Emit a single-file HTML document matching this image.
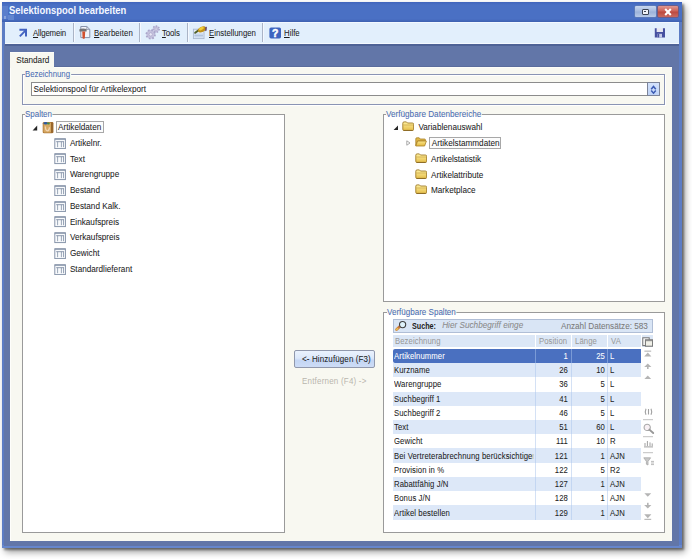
<!DOCTYPE html>
<html><head><meta charset="utf-8"><style>
html,body{margin:0;padding:0;}
body{width:692px;height:559px;position:relative;overflow:hidden;background:#fff;font-family:"Liberation Sans",sans-serif;}
body>div{position:absolute;}
.t{white-space:nowrap;line-height:12px;height:12px;-webkit-text-stroke:0.05px currentColor;}
u{text-decoration:underline;text-underline-offset:1px;}
</style></head><body>
<div style="left:2px;top:2px;width:680px;height:546px;background:#5c7cc4;box-shadow:2px 2px 2px rgba(0,0,0,0.4), 3px 4px 7px rgba(0,0,0,0.4);"></div>
<div style="left:2px;top:545px;width:680px;height:3px;background:#6686cc;"></div>
<div style="left:2px;top:2px;width:680px;height:20px;background:linear-gradient(#4064bc 0px,#4a70c4 3px,#4a70c4 17px,#3e60b0 20px);"></div>
<div style="left:2px;top:6px;width:6px;height:13px;background:#5a7ecc;"></div>
<div style="left:8px;top:15px;width:6px;height:5px;background:#6286d0;"></div>
<div style="left:4px;top:16px;width:2px;height:3px;background:#8aa4dc;"></div>
<div class="t" style="left:8.8px;top:3.93px;font-size:10.6px;color:#f4f7ff;transform:scaleX(0.89);transform-origin:left top;font-weight:bold;-webkit-text-stroke:0;">Selektionspool bearbeiten</div>
<div style="left:635px;top:6px;width:21px;height:11px;background:linear-gradient(#c8d6ee,#a8bce0 45%,#9cb2da 55%,#b8cae8);border-radius:1px;box-shadow:0 0 0 0.6px #6a80b0;"></div>
<div style="left:641.5px;top:8.5px;width:7.0px;height:6.3px;border:1.2px solid #3c4454;box-sizing:border-box;background:#f0f2f8;border-radius:1px;"></div>
<div style="left:643.6px;top:10.9px;width:2.8px;height:1.4px;background:#3c4454;"></div>
<div style="left:658px;top:6px;width:20px;height:11px;background:linear-gradient(#e09890,#cc6258 45%,#bc4a40 55%,#c86a60);border-radius:1px;box-shadow:0 0 0 0.6px #8a4a50;"></div>
<div style="left:4px;top:44px;width:674.5px;height:501.5px;background:#6276a8;"></div>
<div style="left:5px;top:22px;width:674px;height:22px;background:#e2effc;border-top:1px solid #f2f8ff;border-bottom:1px solid #f4f9ff;box-sizing:border-box;"></div>
<div style="left:5px;top:44px;width:674px;height:1.5px;background:#4e6296;"></div>
<div style="left:10px;top:66px;width:662px;height:475px;background:#5a6c9c;"></div>
<div style="left:10px;top:67px;width:662px;height:474px;background:#f8f8f1;border-top:1px solid #fdfdf8;border-left:1.5px solid #fefefb;box-sizing:border-box;"></div>
<div style="left:10px;top:52px;width:44px;height:16px;background:#f8f8f1;border-top:1px solid #fdfdf8;box-sizing:border-box;"></div>
<div class="t" style="left:16.2px;top:55.06px;font-size:8.2px;color:#1c1c1c;">Standard</div>
<div style="left:73px;top:23px;width:1px;height:19px;background:#aab4c6;"></div>
<div style="left:74px;top:23px;width:1px;height:19px;background:#f4f8ff;"></div>
<div style="left:139px;top:23px;width:1px;height:19px;background:#aab4c6;"></div>
<div style="left:140px;top:23px;width:1px;height:19px;background:#f4f8ff;"></div>
<div style="left:187px;top:23px;width:1px;height:19px;background:#aab4c6;"></div>
<div style="left:188px;top:23px;width:1px;height:19px;background:#f4f8ff;"></div>
<div style="left:262px;top:23px;width:1px;height:19px;background:#aab4c6;"></div>
<div style="left:263px;top:23px;width:1px;height:19px;background:#f4f8ff;"></div>
<div class="t" style="left:33px;top:27.22px;font-size:8.6px;color:#1c1c1c;transform:scaleX(0.91);transform-origin:left top;letter-spacing:-0.17px;"><u>A</u>llgemein</div>
<div class="t" style="left:94.3px;top:27.22px;font-size:8.6px;color:#1c1c1c;transform:scaleX(0.91);transform-origin:left top;letter-spacing:0.11px;"><u>B</u>earbeiten</div>
<div class="t" style="left:162.3px;top:27.22px;font-size:8.6px;color:#1c1c1c;transform:scaleX(0.91);transform-origin:left top;letter-spacing:-0.09px;"><u>T</u>ools</div>
<div class="t" style="left:208.9px;top:27.22px;font-size:8.6px;color:#1c1c1c;transform:scaleX(0.91);transform-origin:left top;letter-spacing:0px;"><u>E</u>instellungen</div>
<div class="t" style="left:283.8px;top:27.22px;font-size:8.6px;color:#1c1c1c;transform:scaleX(0.91);transform-origin:left top;letter-spacing:0px;"><u>H</u>ilfe</div>
<div style="left:23px;top:75px;width:643px;height:31px;border:1px solid #ffffff;box-sizing:border-box;background:transparent;"></div>
<div style="left:22px;top:74px;width:643px;height:31px;border:1px solid #8a94b4;box-sizing:border-box;background:transparent;"></div>
<div class="t" style="left:25px;top:67.82px;font-size:8.6px;color:#4a6cb4;transform:scaleX(0.905);transform-origin:left top;background:#f8f8f1;padding:0 1px 0 0;height:8px;">Bezeichnung</div>
<div style="left:31px;top:82px;width:629px;height:14px;border:1px solid #8c8c8c;box-sizing:border-box;background:#fff;"></div>
<div class="t" style="left:33.6px;top:84.46px;font-size:8.2px;color:#1c1c1c;">Selektionspool f&uuml;r Artikelexport</div>
<div style="left:647px;top:82px;width:13px;height:14px;border:1px solid #7c8498;box-sizing:border-box;background:linear-gradient(#d4e3fb,#bed2f6);"></div>
<div style="left:22px;top:114px;width:263px;height:419px;border:1px solid #9a9a9a;box-sizing:border-box;background:#fff;"></div>
<div class="t" style="left:25.3px;top:108.19px;font-size:8.7px;color:#4a6cb4;transform:scaleX(0.915);transform-origin:left top;background:#f8f8f1;padding:0 1px 0 0;height:8px;">Spalten</div>
<div style="left:56px;top:121px;width:48px;height:12px;border:1px solid #a8a8a8;box-sizing:border-box;background:#fcfcfc;"></div>
<div class="t" style="left:58px;top:121.96px;font-size:8.2px;color:#1c1c1c;">Artikeldaten</div>
<div class="t" style="left:69.9px;top:137.96px;font-size:8.2px;color:#1c1c1c;">Artikelnr.</div>
<div class="t" style="left:69.9px;top:153.70px;font-size:8.2px;color:#1c1c1c;">Text</div>
<div class="t" style="left:69.9px;top:169.44px;font-size:8.2px;color:#1c1c1c;">Warengruppe</div>
<div class="t" style="left:69.9px;top:185.18px;font-size:8.2px;color:#1c1c1c;">Bestand</div>
<div class="t" style="left:69.9px;top:200.92px;font-size:8.2px;color:#1c1c1c;">Bestand Kalk.</div>
<div class="t" style="left:69.9px;top:216.66px;font-size:8.2px;color:#1c1c1c;">Einkaufspreis</div>
<div class="t" style="left:69.9px;top:232.40px;font-size:8.2px;color:#1c1c1c;">Verkaufspreis</div>
<div class="t" style="left:69.9px;top:248.14px;font-size:8.2px;color:#1c1c1c;">Gewicht</div>
<div class="t" style="left:69.9px;top:263.88px;font-size:8.2px;color:#1c1c1c;">Standardlieferant</div>
<div style="left:294px;top:350px;width:81px;height:18px;background:linear-gradient(#eaf2fd 0%,#dce8fa 45%,#c4d6f4 60%,#cddcf6 100%);border:1px solid #9098ac;border-radius:2px;box-sizing:border-box;"></div>
<div class="t" style="left:302.2px;top:353.02px;font-size:8.6px;color:#1c1c1c;transform:scaleX(0.93);transform-origin:left top;letter-spacing:0.12px;">&lt;- Hinzuf&uuml;gen (F3)</div>
<div class="t" style="left:302.4px;top:374.62px;font-size:8.6px;color:#b8b6ae;transform:scaleX(0.93);transform-origin:left top;letter-spacing:0.22px;-webkit-text-stroke:0;">Entfernen (F4) -&gt;</div>
<div style="left:383px;top:114px;width:282px;height:188px;border:1px solid #9a9a9a;box-sizing:border-box;background:#fff;"></div>
<div class="t" style="left:386.3px;top:107.79px;font-size:8.7px;color:#4a6cb4;transform:scaleX(0.94);transform-origin:left top;background:#f8f8f1;padding:0 1px 0 0;height:8px;">Verf&uuml;gbare Datenbereiche</div>
<div class="t" style="left:418.4px;top:121.56px;font-size:8.2px;color:#1c1c1c;">Variablenauswahl</div>
<div style="left:429px;top:137px;width:72px;height:12px;border:1px solid #a8a8a8;box-sizing:border-box;background:#fcfcfc;"></div>
<div class="t" style="left:431.8px;top:138.16px;font-size:8.2px;color:#1c1c1c;">Artikelstammdaten</div>
<div class="t" style="left:431px;top:153.96px;font-size:8.2px;color:#1c1c1c;">Artikelstatistik</div>
<div class="t" style="left:431px;top:169.66px;font-size:8.2px;color:#1c1c1c;">Artikelattribute</div>
<div class="t" style="left:431px;top:185.36px;font-size:8.2px;color:#1c1c1c;">Marketplace</div>
<div style="left:383px;top:312px;width:282px;height:221px;border:1px solid #9a9a9a;box-sizing:border-box;background:#fff;"></div>
<div class="t" style="left:386.6px;top:305.59px;font-size:8.7px;color:#4a6cb4;transform:scaleX(0.925);transform-origin:left top;background:#f8f8f1;padding:0 1px 0 0;height:8px;">Verf&uuml;gbare Spalten</div>
<div style="left:393px;top:319px;width:260px;height:14px;border:1px solid #b0bed6;box-sizing:border-box;background:#d9e5f5;"></div>
<div class="t" style="left:411.8px;top:319.89px;font-size:8.4px;color:#1c1c1c;transform:scaleX(0.86);transform-origin:left top;font-weight:bold;-webkit-text-stroke:0;">Suche:</div>
<div class="t" style="left:442.2px;top:320.36px;font-size:8.2px;color:#8a8a8a;font-style:italic;">Hier Suchbegriff einge</div>
<div class="t" style="left:447.9px;width:200px;text-align:right;top:320.56px;font-size:8.2px;color:#7a7a7a;">Anzahl Datens&auml;tze: 583</div>
<div style="left:393px;top:335px;width:142px;height:12px;background:#dce7f6;"></div>
<div style="left:536px;top:335px;width:35px;height:12px;background:#dce7f6;"></div>
<div style="left:572px;top:335px;width:35px;height:12px;background:#dce7f6;"></div>
<div style="left:608px;top:335px;width:33px;height:12px;background:#dce7f6;"></div>
<div style="left:642px;top:335px;width:11px;height:12px;background:#dce7f6;"></div>
<div class="t" style="left:394.5px;top:334.82px;font-size:8.9px;color:#999999;transform:scaleX(0.87);transform-origin:left top;letter-spacing:0.1px;">Bezeichnung</div>
<div class="t" style="left:539px;top:334.82px;font-size:8.9px;color:#999999;transform:scaleX(0.87);transform-origin:left top;letter-spacing:0.1px;">Position</div>
<div class="t" style="left:574.6px;top:334.82px;font-size:8.9px;color:#999999;transform:scaleX(0.87);transform-origin:left top;letter-spacing:0.1px;">L&auml;nge</div>
<div class="t" style="left:611px;top:334.82px;font-size:8.9px;color:#999999;transform:scaleX(0.87);transform-origin:left top;letter-spacing:0.1px;">VA</div>
<div style="left:393px;top:349px;width:248px;height:14px;background:#4a70c0;border-radius:2px 0 0 2px;"></div>
<div class="t" style="left:393.6px;top:349.92px;font-size:8.9px;color:#ffffff;width:160.3448275862069px;overflow:hidden;transform:scaleX(0.87);transform-origin:left top;letter-spacing:0.1px;">Artikelnummer</div>
<div class="t" style="left:368.29999999999995px;width:200px;text-align:right;top:349.92px;font-size:8.9px;color:#ffffff;transform:scaleX(0.87);transform-origin:right top;letter-spacing:0.1px;">1</div>
<div class="t" style="left:404.79999999999995px;width:200px;text-align:right;top:349.92px;font-size:8.9px;color:#ffffff;transform:scaleX(0.87);transform-origin:right top;letter-spacing:0.1px;">25</div>
<div class="t" style="left:609.6px;top:349.92px;font-size:8.9px;color:#ffffff;transform:scaleX(0.87);transform-origin:left top;letter-spacing:0.1px;">L</div>
<div style="left:393px;top:363px;width:248px;height:14px;background:#dde8f8;"></div>
<div class="t" style="left:393.6px;top:364.16px;font-size:8.9px;color:#1c1c1c;width:160.3448275862069px;overflow:hidden;transform:scaleX(0.87);transform-origin:left top;letter-spacing:0.1px;">Kurzname</div>
<div class="t" style="left:368.29999999999995px;width:200px;text-align:right;top:364.16px;font-size:8.9px;color:#1c1c1c;transform:scaleX(0.87);transform-origin:right top;letter-spacing:0.1px;">26</div>
<div class="t" style="left:404.79999999999995px;width:200px;text-align:right;top:364.16px;font-size:8.9px;color:#1c1c1c;transform:scaleX(0.87);transform-origin:right top;letter-spacing:0.1px;">10</div>
<div class="t" style="left:609.6px;top:364.16px;font-size:8.9px;color:#1c1c1c;transform:scaleX(0.87);transform-origin:left top;letter-spacing:0.1px;">L</div>
<div style="left:393px;top:377px;width:248px;height:15px;background:#ffffff;"></div>
<div class="t" style="left:393.6px;top:378.40px;font-size:8.9px;color:#1c1c1c;width:160.3448275862069px;overflow:hidden;transform:scaleX(0.87);transform-origin:left top;letter-spacing:0.1px;">Warengruppe</div>
<div class="t" style="left:368.29999999999995px;width:200px;text-align:right;top:378.40px;font-size:8.9px;color:#1c1c1c;transform:scaleX(0.87);transform-origin:right top;letter-spacing:0.1px;">36</div>
<div class="t" style="left:404.79999999999995px;width:200px;text-align:right;top:378.40px;font-size:8.9px;color:#1c1c1c;transform:scaleX(0.87);transform-origin:right top;letter-spacing:0.1px;">5</div>
<div class="t" style="left:609.6px;top:378.40px;font-size:8.9px;color:#1c1c1c;transform:scaleX(0.87);transform-origin:left top;letter-spacing:0.1px;">L</div>
<div style="left:393px;top:392px;width:248px;height:14px;background:#dde8f8;"></div>
<div class="t" style="left:393.6px;top:392.64px;font-size:8.9px;color:#1c1c1c;width:160.3448275862069px;overflow:hidden;transform:scaleX(0.87);transform-origin:left top;letter-spacing:0.1px;">Suchbegriff 1</div>
<div class="t" style="left:368.29999999999995px;width:200px;text-align:right;top:392.64px;font-size:8.9px;color:#1c1c1c;transform:scaleX(0.87);transform-origin:right top;letter-spacing:0.1px;">41</div>
<div class="t" style="left:404.79999999999995px;width:200px;text-align:right;top:392.64px;font-size:8.9px;color:#1c1c1c;transform:scaleX(0.87);transform-origin:right top;letter-spacing:0.1px;">5</div>
<div class="t" style="left:609.6px;top:392.64px;font-size:8.9px;color:#1c1c1c;transform:scaleX(0.87);transform-origin:left top;letter-spacing:0.1px;">L</div>
<div style="left:393px;top:406px;width:248px;height:14px;background:#ffffff;"></div>
<div class="t" style="left:393.6px;top:406.88px;font-size:8.9px;color:#1c1c1c;width:160.3448275862069px;overflow:hidden;transform:scaleX(0.87);transform-origin:left top;letter-spacing:0.1px;">Suchbegriff 2</div>
<div class="t" style="left:368.29999999999995px;width:200px;text-align:right;top:406.88px;font-size:8.9px;color:#1c1c1c;transform:scaleX(0.87);transform-origin:right top;letter-spacing:0.1px;">46</div>
<div class="t" style="left:404.79999999999995px;width:200px;text-align:right;top:406.88px;font-size:8.9px;color:#1c1c1c;transform:scaleX(0.87);transform-origin:right top;letter-spacing:0.1px;">5</div>
<div class="t" style="left:609.6px;top:406.88px;font-size:8.9px;color:#1c1c1c;transform:scaleX(0.87);transform-origin:left top;letter-spacing:0.1px;">L</div>
<div style="left:393px;top:420px;width:248px;height:14px;background:#dde8f8;"></div>
<div class="t" style="left:393.6px;top:421.12px;font-size:8.9px;color:#1c1c1c;width:160.3448275862069px;overflow:hidden;transform:scaleX(0.87);transform-origin:left top;letter-spacing:0.1px;">Text</div>
<div class="t" style="left:368.29999999999995px;width:200px;text-align:right;top:421.12px;font-size:8.9px;color:#1c1c1c;transform:scaleX(0.87);transform-origin:right top;letter-spacing:0.1px;">51</div>
<div class="t" style="left:404.79999999999995px;width:200px;text-align:right;top:421.12px;font-size:8.9px;color:#1c1c1c;transform:scaleX(0.87);transform-origin:right top;letter-spacing:0.1px;">60</div>
<div class="t" style="left:609.6px;top:421.12px;font-size:8.9px;color:#1c1c1c;transform:scaleX(0.87);transform-origin:left top;letter-spacing:0.1px;">L</div>
<div style="left:393px;top:434px;width:248px;height:14px;background:#ffffff;"></div>
<div class="t" style="left:393.6px;top:435.36px;font-size:8.9px;color:#1c1c1c;width:160.3448275862069px;overflow:hidden;transform:scaleX(0.87);transform-origin:left top;letter-spacing:0.1px;">Gewicht</div>
<div class="t" style="left:368.29999999999995px;width:200px;text-align:right;top:435.36px;font-size:8.9px;color:#1c1c1c;transform:scaleX(0.87);transform-origin:right top;letter-spacing:0.1px;">111</div>
<div class="t" style="left:404.79999999999995px;width:200px;text-align:right;top:435.36px;font-size:8.9px;color:#1c1c1c;transform:scaleX(0.87);transform-origin:right top;letter-spacing:0.1px;">10</div>
<div class="t" style="left:609.6px;top:435.36px;font-size:8.9px;color:#1c1c1c;transform:scaleX(0.87);transform-origin:left top;letter-spacing:0.1px;">R</div>
<div style="left:393px;top:448px;width:248px;height:15px;background:#dde8f8;"></div>
<div class="t" style="left:393.6px;top:449.60px;font-size:8.9px;color:#1c1c1c;width:160.3448275862069px;overflow:hidden;transform:scaleX(0.87);transform-origin:left top;letter-spacing:0.1px;">Bei Vertreterabrechnung ber&uuml;cksichtigen</div>
<div class="t" style="left:368.29999999999995px;width:200px;text-align:right;top:449.60px;font-size:8.9px;color:#1c1c1c;transform:scaleX(0.87);transform-origin:right top;letter-spacing:0.1px;">121</div>
<div class="t" style="left:404.79999999999995px;width:200px;text-align:right;top:449.60px;font-size:8.9px;color:#1c1c1c;transform:scaleX(0.87);transform-origin:right top;letter-spacing:0.1px;">1</div>
<div class="t" style="left:609.6px;top:449.60px;font-size:8.9px;color:#1c1c1c;transform:scaleX(0.87);transform-origin:left top;letter-spacing:0.1px;">AJN</div>
<div style="left:393px;top:463px;width:248px;height:14px;background:#ffffff;"></div>
<div class="t" style="left:393.6px;top:463.84px;font-size:8.9px;color:#1c1c1c;width:160.3448275862069px;overflow:hidden;transform:scaleX(0.87);transform-origin:left top;letter-spacing:0.1px;">Provision in %</div>
<div class="t" style="left:368.29999999999995px;width:200px;text-align:right;top:463.84px;font-size:8.9px;color:#1c1c1c;transform:scaleX(0.87);transform-origin:right top;letter-spacing:0.1px;">122</div>
<div class="t" style="left:404.79999999999995px;width:200px;text-align:right;top:463.84px;font-size:8.9px;color:#1c1c1c;transform:scaleX(0.87);transform-origin:right top;letter-spacing:0.1px;">5</div>
<div class="t" style="left:609.6px;top:463.84px;font-size:8.9px;color:#1c1c1c;transform:scaleX(0.87);transform-origin:left top;letter-spacing:0.1px;">R2</div>
<div style="left:393px;top:477px;width:248px;height:14px;background:#dde8f8;"></div>
<div class="t" style="left:393.6px;top:478.08px;font-size:8.9px;color:#1c1c1c;width:160.3448275862069px;overflow:hidden;transform:scaleX(0.87);transform-origin:left top;letter-spacing:0.1px;">Rabattf&auml;hig J/N</div>
<div class="t" style="left:368.29999999999995px;width:200px;text-align:right;top:478.08px;font-size:8.9px;color:#1c1c1c;transform:scaleX(0.87);transform-origin:right top;letter-spacing:0.1px;">127</div>
<div class="t" style="left:404.79999999999995px;width:200px;text-align:right;top:478.08px;font-size:8.9px;color:#1c1c1c;transform:scaleX(0.87);transform-origin:right top;letter-spacing:0.1px;">1</div>
<div class="t" style="left:609.6px;top:478.08px;font-size:8.9px;color:#1c1c1c;transform:scaleX(0.87);transform-origin:left top;letter-spacing:0.1px;">AJN</div>
<div style="left:393px;top:491px;width:248px;height:14px;background:#ffffff;"></div>
<div class="t" style="left:393.6px;top:492.32px;font-size:8.9px;color:#1c1c1c;width:160.3448275862069px;overflow:hidden;transform:scaleX(0.87);transform-origin:left top;letter-spacing:0.1px;">Bonus J/N</div>
<div class="t" style="left:368.29999999999995px;width:200px;text-align:right;top:492.32px;font-size:8.9px;color:#1c1c1c;transform:scaleX(0.87);transform-origin:right top;letter-spacing:0.1px;">128</div>
<div class="t" style="left:404.79999999999995px;width:200px;text-align:right;top:492.32px;font-size:8.9px;color:#1c1c1c;transform:scaleX(0.87);transform-origin:right top;letter-spacing:0.1px;">1</div>
<div class="t" style="left:609.6px;top:492.32px;font-size:8.9px;color:#1c1c1c;transform:scaleX(0.87);transform-origin:left top;letter-spacing:0.1px;">AJN</div>
<div style="left:393px;top:505px;width:248px;height:15px;background:#dde8f8;"></div>
<div class="t" style="left:393.6px;top:506.56px;font-size:8.9px;color:#1c1c1c;width:160.3448275862069px;overflow:hidden;transform:scaleX(0.87);transform-origin:left top;letter-spacing:0.1px;">Artikel bestellen</div>
<div class="t" style="left:368.29999999999995px;width:200px;text-align:right;top:506.56px;font-size:8.9px;color:#1c1c1c;transform:scaleX(0.87);transform-origin:right top;letter-spacing:0.1px;">129</div>
<div class="t" style="left:404.79999999999995px;width:200px;text-align:right;top:506.56px;font-size:8.9px;color:#1c1c1c;transform:scaleX(0.87);transform-origin:right top;letter-spacing:0.1px;">1</div>
<div class="t" style="left:609.6px;top:506.56px;font-size:8.9px;color:#1c1c1c;transform:scaleX(0.87);transform-origin:left top;letter-spacing:0.1px;">AJN</div>
<div style="left:535px;top:349px;width:1px;height:171px;background:rgba(170,195,235,0.5);"></div>
<div style="left:571px;top:349px;width:1px;height:171px;background:rgba(170,195,235,0.5);"></div>
<div style="left:607px;top:349px;width:1px;height:171px;background:rgba(170,195,235,0.5);"></div>
<svg width="0" height="0" style="position:absolute"><defs><linearGradient id="fg" x1="0" y1="0" x2="0" y2="1"><stop offset="0" stop-color="#fdf0a0"/><stop offset="1" stop-color="#e6be4a"/></linearGradient><linearGradient id="fg2" x1="0" y1="0" x2="0" y2="1"><stop offset="0" stop-color="#fbe68a"/><stop offset="1" stop-color="#e2b83e"/></linearGradient></defs></svg>
<svg style="position:absolute;left:17px;top:27px;" width="12" height="12" viewBox="0 0 12 12"><path d="M2.4 2.8 H9 V9.4" fill="none" stroke="#4262c0" stroke-width="2"/><path d="M2.8 9.4 L8.4 3.6" stroke="#4262c0" stroke-width="1.9"/></svg>
<svg style="position:absolute;left:78px;top:24px;" width="14" height="16" viewBox="0 0 14 16"><path d="M2.8 2.5 H8.8 L11.8 5.4 V13.6 H2.8 Z" fill="#f2f4fa" stroke="#8892aa" stroke-width="1"/><path d="M8.8 2.5 V5.4 H11.8" fill="none" stroke="#8892aa" stroke-width="0.8"/><path d="M1.4 5.2 Q4.6 4 8.6 5 V7.6 H1.4 Z" fill="#747478"/><path d="M4.2 7.4 H7.2 L6.8 14.2 Q5.7 15.2 4.6 14.2 Z" fill="#d2502e"/></svg>
<svg style="position:absolute;left:144px;top:24px;" width="18" height="16" viewBox="0 0 18 16"><circle cx="6.7" cy="10.4" r="4.3" fill="#c6c2de" stroke="#aaa6ca" stroke-width="1.8" stroke-dasharray="1.7 1.68"/><circle cx="6.7" cy="10.4" r="1.7" fill="#e8e6f4" stroke="#a8a4c8" stroke-width="0.7"/><circle cx="12.1" cy="5.1" r="3.1" fill="#c6c2de" stroke="#aaa6ca" stroke-width="1.5" stroke-dasharray="1.4 1.38"/><circle cx="12.1" cy="5.1" r="1.2" fill="#e8e6f4" stroke="#a8a4c8" stroke-width="0.6"/></svg>
<svg style="position:absolute;left:192px;top:24px;" width="16" height="16" viewBox="0 0 16 16"><rect x="1.4" y="5.2" width="10.6" height="9.4" fill="#e4ecf6" stroke="#a8b8d0" stroke-width="0.9"/><rect x="2.4" y="9.4" width="8.6" height="4.2" fill="#c8d8ee"/><path d="M2.4 11.6 H11" stroke="#a8bcd8" stroke-width="0.8"/><path d="M3.2 8.8 L6.6 6.2" stroke="#50602a" stroke-width="2" stroke-linecap="round"/><ellipse cx="10" cy="5.4" rx="4.3" ry="2.7" transform="rotate(-25 10 5.4)" fill="#c09018"/><ellipse cx="9.4" cy="4.6" rx="2.6" ry="1.4" transform="rotate(-25 9.4 4.6)" fill="#f0cc38"/><path d="M13.4 3 L14.8 2.8 L14.6 6.6 L13.2 7.2 Z" fill="#5a3a68"/></svg>
<svg style="position:absolute;left:269px;top:26.5px;" width="12.5" height="12" viewBox="0 0 12.5 12"><rect x="0.4" y="0.4" width="11.6" height="11" rx="1.6" fill="#3c64c0"/><text x="6.2" y="9.8" font-family="Liberation Sans" font-weight="bold" font-size="10.5" fill="#fff" stroke="#fff" stroke-width="0.5" text-anchor="middle">?</text></svg>
<svg style="position:absolute;left:653.5px;top:27px;" width="12" height="11" viewBox="0 0 12 11"><path d="M0.8 1.2 H2.8 V5 H8.8 V1.2 H11 V10.6 H0.8 Z" fill="#4650a0"/><rect x="2.8" y="1.2" width="6" height="3.8" fill="#e6e6f0"/><rect x="3.4" y="6.8" width="4.6" height="3.8" fill="#c4cae8"/><rect x="3.6" y="7" width="1.6" height="3.4" fill="#4650a0"/></svg>
<svg style="position:absolute;left:649px;top:84px;" width="10" height="11" viewBox="0 0 10 11"><path d="M2.2 5.2 L4.5 2.4 L6.8 5.2" fill="none" stroke="#3a5ab2" stroke-width="1.5"/><path d="M2.2 6.6 L4.5 9.2 L6.8 6.6" fill="none" stroke="#3a5ab2" stroke-width="1.5"/></svg>
<svg style="position:absolute;left:32px;top:124.8px;" width="6" height="6" viewBox="0 0 6 6"><path d="M0.6 5.4 H5.2 V0.6 Z" fill="#262626"/></svg>
<svg style="position:absolute;left:41.5px;top:121.2px;" width="12" height="13" viewBox="0 0 12 13"><rect x="0.7" y="0.9" width="10.6" height="11.4" rx="1.4" fill="#b07a38"/><rect x="1.5" y="1.8" width="7.6" height="9.6" rx="0.8" fill="#d6a862"/><rect x="9" y="1.4" width="2.2" height="10.4" fill="#98662c"/><ellipse cx="3.6" cy="2.3" rx="2" ry="1.2" fill="#2c5aa4"/><ellipse cx="6.4" cy="2.5" rx="1.4" ry="1" fill="#3c8c4c"/><path d="M3.4 5.6 Q3.4 9.8 5.4 9.8 Q7.4 9.8 7.4 6.2" fill="none" stroke="#f2d4b0" stroke-width="1.3"/></svg>
<svg style="position:absolute;left:53.6px;top:137.70000000000002px;" width="12.5" height="11.5" viewBox="0 0 12.5 11.5"><rect x="0.8" y="0.8" width="10.6" height="9.8" fill="#f8fafc" stroke="#8290a6" stroke-width="0.95"/><rect x="0.8" y="0.6" width="10.6" height="1.1" fill="#8290a6"/><path d="M2.2 3.7 H10" stroke="#8290a6" stroke-width="0.9"/><path d="M3.6 3.7 V9.2 M7.4 3.7 V9.2 M9.5 3.7 V9.2" stroke="#8290a6" stroke-width="0.8"/></svg>
<svg style="position:absolute;left:53.6px;top:153.44000000000003px;" width="12.5" height="11.5" viewBox="0 0 12.5 11.5"><rect x="0.8" y="0.8" width="10.6" height="9.8" fill="#f8fafc" stroke="#8290a6" stroke-width="0.95"/><rect x="0.8" y="0.6" width="10.6" height="1.1" fill="#8290a6"/><path d="M2.2 3.7 H10" stroke="#8290a6" stroke-width="0.9"/><path d="M3.6 3.7 V9.2 M7.4 3.7 V9.2 M9.5 3.7 V9.2" stroke="#8290a6" stroke-width="0.8"/></svg>
<svg style="position:absolute;left:53.6px;top:169.18px;" width="12.5" height="11.5" viewBox="0 0 12.5 11.5"><rect x="0.8" y="0.8" width="10.6" height="9.8" fill="#f8fafc" stroke="#8290a6" stroke-width="0.95"/><rect x="0.8" y="0.6" width="10.6" height="1.1" fill="#8290a6"/><path d="M2.2 3.7 H10" stroke="#8290a6" stroke-width="0.9"/><path d="M3.6 3.7 V9.2 M7.4 3.7 V9.2 M9.5 3.7 V9.2" stroke="#8290a6" stroke-width="0.8"/></svg>
<svg style="position:absolute;left:53.6px;top:184.92000000000002px;" width="12.5" height="11.5" viewBox="0 0 12.5 11.5"><rect x="0.8" y="0.8" width="10.6" height="9.8" fill="#f8fafc" stroke="#8290a6" stroke-width="0.95"/><rect x="0.8" y="0.6" width="10.6" height="1.1" fill="#8290a6"/><path d="M2.2 3.7 H10" stroke="#8290a6" stroke-width="0.9"/><path d="M3.6 3.7 V9.2 M7.4 3.7 V9.2 M9.5 3.7 V9.2" stroke="#8290a6" stroke-width="0.8"/></svg>
<svg style="position:absolute;left:53.6px;top:200.66000000000003px;" width="12.5" height="11.5" viewBox="0 0 12.5 11.5"><rect x="0.8" y="0.8" width="10.6" height="9.8" fill="#f8fafc" stroke="#8290a6" stroke-width="0.95"/><rect x="0.8" y="0.6" width="10.6" height="1.1" fill="#8290a6"/><path d="M2.2 3.7 H10" stroke="#8290a6" stroke-width="0.9"/><path d="M3.6 3.7 V9.2 M7.4 3.7 V9.2 M9.5 3.7 V9.2" stroke="#8290a6" stroke-width="0.8"/></svg>
<svg style="position:absolute;left:53.6px;top:216.4px;" width="12.5" height="11.5" viewBox="0 0 12.5 11.5"><rect x="0.8" y="0.8" width="10.6" height="9.8" fill="#f8fafc" stroke="#8290a6" stroke-width="0.95"/><rect x="0.8" y="0.6" width="10.6" height="1.1" fill="#8290a6"/><path d="M2.2 3.7 H10" stroke="#8290a6" stroke-width="0.9"/><path d="M3.6 3.7 V9.2 M7.4 3.7 V9.2 M9.5 3.7 V9.2" stroke="#8290a6" stroke-width="0.8"/></svg>
<svg style="position:absolute;left:53.6px;top:232.14000000000001px;" width="12.5" height="11.5" viewBox="0 0 12.5 11.5"><rect x="0.8" y="0.8" width="10.6" height="9.8" fill="#f8fafc" stroke="#8290a6" stroke-width="0.95"/><rect x="0.8" y="0.6" width="10.6" height="1.1" fill="#8290a6"/><path d="M2.2 3.7 H10" stroke="#8290a6" stroke-width="0.9"/><path d="M3.6 3.7 V9.2 M7.4 3.7 V9.2 M9.5 3.7 V9.2" stroke="#8290a6" stroke-width="0.8"/></svg>
<svg style="position:absolute;left:53.6px;top:247.88000000000002px;" width="12.5" height="11.5" viewBox="0 0 12.5 11.5"><rect x="0.8" y="0.8" width="10.6" height="9.8" fill="#f8fafc" stroke="#8290a6" stroke-width="0.95"/><rect x="0.8" y="0.6" width="10.6" height="1.1" fill="#8290a6"/><path d="M2.2 3.7 H10" stroke="#8290a6" stroke-width="0.9"/><path d="M3.6 3.7 V9.2 M7.4 3.7 V9.2 M9.5 3.7 V9.2" stroke="#8290a6" stroke-width="0.8"/></svg>
<svg style="position:absolute;left:53.6px;top:263.62px;" width="12.5" height="11.5" viewBox="0 0 12.5 11.5"><rect x="0.8" y="0.8" width="10.6" height="9.8" fill="#f8fafc" stroke="#8290a6" stroke-width="0.95"/><rect x="0.8" y="0.6" width="10.6" height="1.1" fill="#8290a6"/><path d="M2.2 3.7 H10" stroke="#8290a6" stroke-width="0.9"/><path d="M3.6 3.7 V9.2 M7.4 3.7 V9.2 M9.5 3.7 V9.2" stroke="#8290a6" stroke-width="0.8"/></svg>
<svg style="position:absolute;left:393px;top:125.2px;" width="6" height="6" viewBox="0 0 6 6"><path d="M0.6 5 H5 V0.6 Z" fill="#262626"/></svg>
<svg style="position:absolute;left:401.6px;top:120.9px;" width="12.5" height="11" viewBox="0 0 12.5 11"><path d="M0.8 2.2 Q0.8 0.9 2.1 0.9 H4.4 L5.5 2 H10.4 Q11.6 2 11.6 3.2 V8.4 Q11.6 9.5 10.4 9.5 H2 Q0.8 9.5 0.8 8.4 Z" fill="url(#fg)" stroke="#a07c28" stroke-width="0.9"/><path d="M1.4 4 H11" stroke="#c8a040" stroke-width="0.6"/><path d="M1.6 9.4 H10.8" stroke="#806020" stroke-width="0.7"/></svg>
<svg style="position:absolute;left:406px;top:140px;" width="5" height="6" viewBox="0 0 5 6"><path d="M0.8 0.8 L4 3 L0.8 5.2 Z" fill="#fff" stroke="#a0a0a0" stroke-width="0.9"/></svg>
<svg style="position:absolute;left:414.8px;top:137.2px;" width="12" height="10" viewBox="0 0 12 10"><path d="M0.8 1.8 Q0.8 0.8 1.8 0.8 H4.2 L5.2 2 H9.6 Q10.4 2 10.4 2.8 V4 H2.6 L0.8 8.6 Z" fill="#e0b848" stroke="#a8822a" stroke-width="0.8"/><path d="M2.6 4 H11.4 L9.6 9 H0.8 Z" fill="url(#fg2)" stroke="#a8822a" stroke-width="0.8"/></svg>
<svg style="position:absolute;left:414.8px;top:152.9px;" width="12.5" height="11" viewBox="0 0 12.5 11"><path d="M0.8 2.2 Q0.8 0.9 2.1 0.9 H4.4 L5.5 2 H10.4 Q11.6 2 11.6 3.2 V8.4 Q11.6 9.5 10.4 9.5 H2 Q0.8 9.5 0.8 8.4 Z" fill="url(#fg)" stroke="#a07c28" stroke-width="0.9"/><path d="M1.4 4 H11" stroke="#c8a040" stroke-width="0.6"/><path d="M1.6 9.4 H10.8" stroke="#806020" stroke-width="0.7"/></svg>
<svg style="position:absolute;left:414.8px;top:168.6px;" width="12.5" height="11" viewBox="0 0 12.5 11"><path d="M0.8 2.2 Q0.8 0.9 2.1 0.9 H4.4 L5.5 2 H10.4 Q11.6 2 11.6 3.2 V8.4 Q11.6 9.5 10.4 9.5 H2 Q0.8 9.5 0.8 8.4 Z" fill="url(#fg)" stroke="#a07c28" stroke-width="0.9"/><path d="M1.4 4 H11" stroke="#c8a040" stroke-width="0.6"/><path d="M1.6 9.4 H10.8" stroke="#806020" stroke-width="0.7"/></svg>
<svg style="position:absolute;left:414.8px;top:184.4px;" width="12.5" height="11" viewBox="0 0 12.5 11"><path d="M0.8 2.2 Q0.8 0.9 2.1 0.9 H4.4 L5.5 2 H10.4 Q11.6 2 11.6 3.2 V8.4 Q11.6 9.5 10.4 9.5 H2 Q0.8 9.5 0.8 8.4 Z" fill="url(#fg)" stroke="#a07c28" stroke-width="0.9"/><path d="M1.4 4 H11" stroke="#c8a040" stroke-width="0.6"/><path d="M1.6 9.4 H10.8" stroke="#806020" stroke-width="0.7"/></svg>
<svg style="position:absolute;left:663px;top:7px;" width="10" height="10" viewBox="0 0 10 10"><path d="M2.2 2 L7.8 8 M7.8 2 L2.2 8" stroke="#ffffff" stroke-width="2"/></svg>
<svg style="position:absolute;left:394px;top:320px;" width="13" height="12" viewBox="0 0 13 12"><path d="M2.6 9.6 L5.8 6.6" stroke="#c87840" stroke-width="2.8" stroke-linecap="round"/><path d="M2.4 9.8 L3.6 8.6" stroke="#e8c050" stroke-width="1.6" stroke-linecap="round"/><circle cx="8.6" cy="4.6" r="3.1" fill="#dff2fa" stroke="#404040" stroke-width="1.1"/></svg>
<svg style="position:absolute;left:641.5px;top:336.5px;" width="11.5" height="10" viewBox="0 0 11.5 10"><rect x="0.8" y="0.8" width="6.4" height="7.8" fill="#fff" stroke="#707070" stroke-width="1"/><rect x="3.4" y="2.8" width="7.2" height="6.4" fill="#f0f0e8" stroke="#707070" stroke-width="1"/><rect x="3.8" y="2.8" width="6.4" height="1.4" fill="#909090"/></svg>
<svg style="position:absolute;left:643px;top:350px;" width="10" height="8" viewBox="0 0 10 8"><rect x="1.4" y="0.6" width="6.8" height="1.1" fill="#b4b4b4"/><path d="M1.2 6.6 L4.8 2.6 L8.4 6.6 Z" fill="#b4b4b4"/></svg>
<svg style="position:absolute;left:643px;top:362px;" width="10" height="8" viewBox="0 0 10 8"><path d="M1.2 5 L4.8 1.4 L8.4 5 Z" fill="#b4b4b4"/><rect x="4" y="4.4" width="1.6" height="2.6" fill="#b4b4b4"/></svg>
<svg style="position:absolute;left:643px;top:374px;" width="10" height="6" viewBox="0 0 10 6"><path d="M1.4 5 L4.8 1.4 L8.2 5 Z" fill="#b4b4b4"/></svg>
<svg style="position:absolute;left:642.5px;top:407.5px;" width="11" height="8" viewBox="0 0 11 8"><path d="M3 0.8 Q1.6 3.8 3 6.8 M8 0.8 Q9.4 3.8 8 6.8 M5.5 1 V6.6" fill="none" stroke="#a0a0a0" stroke-width="1.1"/></svg>
<svg style="position:absolute;left:643px;top:418.8px;" width="10" height="2" viewBox="0 0 10 2"><rect x="0" y="0.2" width="10" height="1" fill="#c0c0c0"/></svg>
<svg style="position:absolute;left:642.5px;top:422.5px;" width="12" height="12" viewBox="0 0 12 12"><circle cx="4.2" cy="4.4" r="3.1" fill="#f8f0f4" stroke="#a8a8a8" stroke-width="1.1"/><path d="M6.4 6.6 L10.2 10" stroke="#989898" stroke-width="1.9" stroke-linecap="round"/></svg>
<svg style="position:absolute;left:643px;top:435.7px;" width="10" height="2" viewBox="0 0 10 2"><rect x="0" y="0.2" width="10" height="1" fill="#c0c0c0"/></svg>
<svg style="position:absolute;left:642.5px;top:440px;" width="11" height="8" viewBox="0 0 11 8"><path d="M2 6 V3 M4.4 6 V1 M7 6 V2.4 M9.2 6 V3.4" stroke="#a0a0a0" stroke-width="1"/><rect x="1" y="6.4" width="9" height="1" fill="#a0a0a0"/></svg>
<svg style="position:absolute;left:643px;top:451.8px;" width="10" height="2" viewBox="0 0 10 2"><rect x="0" y="0.2" width="10" height="1" fill="#c0c0c0"/></svg>
<svg style="position:absolute;left:642.5px;top:457px;" width="12" height="9" viewBox="0 0 12 9"><path d="M0.8 0.8 H7.6 L5 4.4 V8 L3.4 7.2 V4.4 Z" fill="#c8c8c8" stroke="#a8a8a8" stroke-width="0.8"/><path d="M8 4.4 H11 M8 6 H11 M8 7.6 H11" stroke="#a8a8a8" stroke-width="0.8"/></svg>
<svg style="position:absolute;left:643px;top:491.5px;" width="10" height="6" viewBox="0 0 10 6"><path d="M1.4 1.2 L4.8 4.8 L8.2 1.2 Z" fill="#b4b4b4"/></svg>
<svg style="position:absolute;left:643px;top:502px;" width="10" height="8" viewBox="0 0 10 8"><rect x="4" y="0.8" width="1.6" height="2.6" fill="#b4b4b4"/><path d="M1.2 3 L4.8 6.6 L8.4 3 Z" fill="#b4b4b4"/></svg>
<svg style="position:absolute;left:643px;top:513px;" width="10" height="8" viewBox="0 0 10 8"><path d="M1.2 1.2 L4.8 5.2 L8.4 1.2 Z" fill="#b4b4b4"/><rect x="1.4" y="5.8" width="6.8" height="1.1" fill="#b4b4b4"/></svg>
</body></html>
